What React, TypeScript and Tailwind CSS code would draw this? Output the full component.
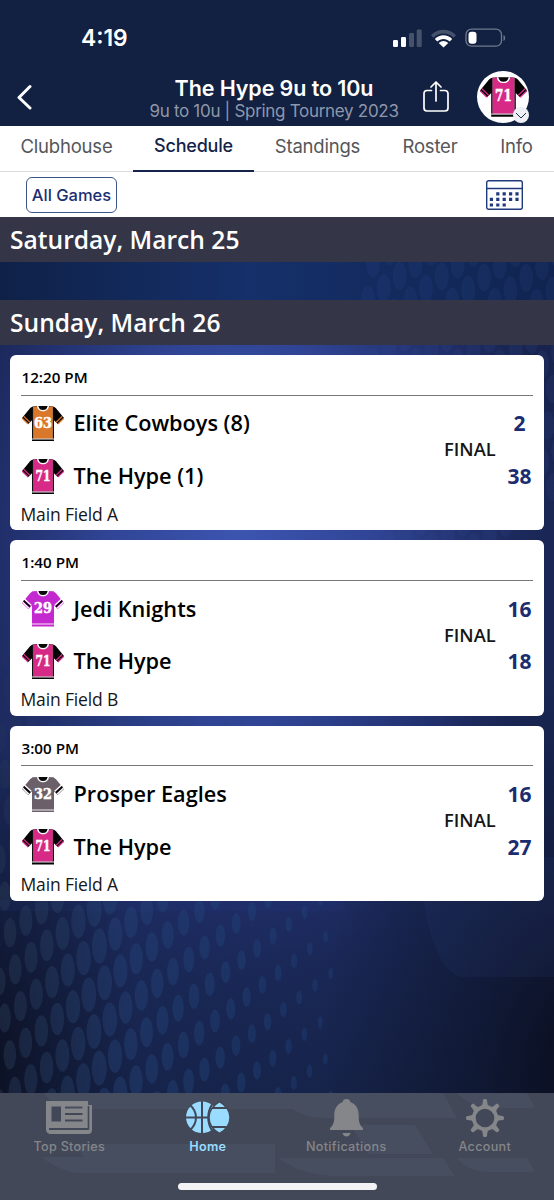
import { ReactNode } from "react";

interface Kit {
  number: string;
  color: string;
  sleeve: string;
  trim: string;
  dark?: boolean;
}

interface Team {
  name: string;
  score: number;
  kit: Kit;
}

interface Game {
  time: string;
  field: string;
  teams: Team[];
}

const hypeKit: Kit = { number: "71", color: "#d62a86", sleeve: "#050505", trim: "#d62a86", dark: true };
const cowboysKit: Kit = { number: "63", color: "#d9772b", sleeve: "#050505", trim: "#d9772b", dark: true };
const jediKit: Kit = { number: "29", color: "#c429cf", sleeve: "#c429cf", trim: "#050505" };
const eaglesKit: Kit = { number: "32", color: "#6b5f69", sleeve: "#6b5f69", trim: "#050505" };

const games: Game[] = [
  {
    time: "12:20 PM",
    field: "Main Field A",
    teams: [
      { name: "Elite Cowboys (8)", score: 2, kit: cowboysKit },
      { name: "The Hype (1)", score: 38, kit: hypeKit },
    ],
  },
  {
    time: "1:40 PM",
    field: "Main Field B",
    teams: [
      { name: "Jedi Knights", score: 16, kit: jediKit },
      { name: "The Hype", score: 18, kit: hypeKit },
    ],
  },
  {
    time: "3:00 PM",
    field: "Main Field A",
    teams: [
      { name: "Prosper Eagles", score: 16, kit: eaglesKit },
      { name: "The Hype", score: 27, kit: hypeKit },
    ],
  },
];

function Jersey({ kit, className }: { kit: Kit; className: string }) {
  const edge = kit.dark ? "#050505" : kit.color;
  return (
    <svg viewBox="0 0 42 35.5" className={className}>
      <path d="M11 .5 16 0h10l5 .5c2 .5 3 1.500 4 3L42 12l-6.300 6-4-4H10.300l-4 4L0 12l7-8.500c1-1.500 2-2.500 4-3Z" fill={kit.sleeve} />
      {kit.dark ? (
        <g stroke={kit.trim} strokeWidth="1.200">
          <path d="m1.700 10.300 6.200 6M40.300 10.300l-6.200 6M.2 12.300l6 5.700M41.800 12.300l-6 5.700" />
        </g>
      ) : (
        <>
          <path d="m2.600 8.200 6.600 6M39.400 8.200l-6.600 6M.7 11.100l6 5.900M41.300 11.100l-6 5.900" stroke="#fff" strokeWidth="1.300" />
          <path d="m1.600 9.700 6.400 6M40.400 9.700l-6.400 6" stroke={kit.trim} strokeWidth="1.600" />
        </>
      )}
      <path d="M10 1h22v34.500H10Z" fill={edge} />
      <path d={kit.dark ? "M11.200.5h19.600v32.300H11.200Z" : "M10 .5h22v32.500H10Z"} fill={kit.color} />
      {kit.dark && <path d="M11.200 1v31M30.800 1v31" stroke="#fff" strokeOpacity=".4" strokeWidth=".4" />}
      <path d="M10 33h22" stroke="#fff" strokeWidth=".9" />
      <path d="M15 0c.6 3.700 3 5.300 6 5.300S26.400 3.700 27 0Z" fill="#fff" />
      <path d="M16.400 0c.5 2.900 2.100 4.100 4.600 4.100S25.100 2.900 25.600 0Z" fill="#080808" />
      <text
        x="21"
        y="21.5"
        textAnchor="middle"
        fill="#fff"
        stroke="#fff"
        strokeWidth=".5"
        fontSize="14.5"
        fontWeight="700"
        className="font-['DejaVu_Serif',serif]"
        textLength={kit.number === "71" ? 15 : 18}
        lengthAdjust="spacingAndGlyphs"
      >
        {kit.number}
      </text>
    </svg>
  );
}

function Backdrop() {
  // halftone dots, shrinking towards the middle of the screen
  const left: ReactNode[] = [];
  for (let j = -9; j < 14; j++) {
    for (let i = -12; i < 30; i++) {
      const x = 10 + 15.8 * i + 5.2 * j;
      const y = 932.7 - 12 * i + 36.7 * j;
      if (x < -8 || x > 335 || y < 640 || y > 1120) continue;
      const size = x < 100 ? 0.82 + x / 550 : 1 - (x - 100) / 330;
      const fade = y < 900 ? Math.max(0.15, (y - 600) / 300) : 1;
      left.push(<ellipse key={`${i}.${j}`} cx={x} cy={y} rx={7.5 * size} ry={17.5 * size} opacity={fade} />);
    }
  }
  const right: ReactNode[] = [];
  for (let j = -1; j < 11; j++) {
    for (let i = 0; i < 32; i++) {
      const x = 368 + 15.8 * i - 5.2 * j;
      const y = 300 - 12 * i + 36.7 * j;
      if (y < 240 || y > 560 || x < 365 || x > 570) continue;
      right.push(<ellipse key={`${i}.${j}`} cx={x} cy={y} rx="7" ry="14" />);
    }
  }
  return (
    <svg viewBox="0 0 554 876" className="absolute inset-0 h-full w-full" preserveAspectRatio="none">
      <defs>
        <radialGradient id="glow" gradientUnits="userSpaceOnUse" cx="0" cy="0" r="1" gradientTransform="translate(240 310) scale(330 480)">
          <stop offset="0" stopColor="#3c55b0" />
          <stop offset=".4" stopColor="#304596" />
          <stop offset=".75" stopColor="#212f6c" stopOpacity=".8" />
          <stop offset="1" stopColor="#1b2858" stopOpacity="0" />
        </radialGradient>
        <linearGradient id="base" x1="0" y1="0" x2="0" y2="1">
          <stop offset="0" stopColor="#17224a" />
          <stop offset=".78" stopColor="#1b2a5c" />
          <stop offset="1" stopColor="#16234a" />
        </linearGradient>
        <linearGradient id="top" x1="0" y1="0" x2="1" y2="0">
          <stop offset="0" stopColor="#0f2148" />
          <stop offset=".45" stopColor="#15306a" />
          <stop offset="1" stopColor="#10244f" />
        </linearGradient>
        <radialGradient id="cornerLeft" gradientUnits="userSpaceOnUse" cx="0" cy="0" r="1" gradientTransform="translate(-20 850) scale(160 330)">
          <stop offset="0" stopColor="#0a0e1c" stopOpacity=".9" />
          <stop offset="1" stopColor="#0a0e1c" stopOpacity="0" />
        </radialGradient>
        <radialGradient id="cornerRight" gradientUnits="userSpaceOnUse" cx="0" cy="0" r="1" gradientTransform="translate(590 850) scale(270 420)">
          <stop offset="0" stopColor="#080b18" stopOpacity=".95" />
          <stop offset=".4" stopColor="#0b1022" stopOpacity=".6" />
          <stop offset="1" stopColor="#0b1022" stopOpacity="0" />
        </radialGradient>
        <linearGradient id="dots" gradientUnits="userSpaceOnUse" x1="0" y1="0" x2="330" y2="0">
          <stop offset="0" stopColor="#2a3b56" stopOpacity=".42" />
          <stop offset=".35" stopColor="#264478" stopOpacity=".42" />
          <stop offset=".7" stopColor="#20467c" stopOpacity=".38" />
          <stop offset="1" stopColor="#224a88" stopOpacity=".28" />
        </linearGradient>
      </defs>
      <rect width="554" height="876" fill="url(#base)" />
      <rect width="554" height="876" fill="url(#glow)" />
      <rect width="554" height="100" fill="url(#top)" />
      <rect width="554" height="876" fill="url(#cornerLeft)" />
      <rect width="554" height="876" fill="url(#cornerRight)" />
      <path d="M420 640c2 62 16 116 42 120h92V640Z" fill="#2a3f78" opacity=".16" />
      <path d="M0 683h344v11H0Z" fill="#2b3f8c" opacity=".12" />
      <g transform="translate(0 -217)">
        <g fill="url(#dots)">{left}</g>
        <g fill="#34529a" opacity=".14">{right}</g>
      </g>
    </svg>
  );
}

function StatusBar() {
  return (
    <div className="flex h-[72px] items-center justify-between pl-[81px] pr-[48px] pt-[3px]">
      <span className="pt-px text-[22.8px] font-semibold leading-none">4:19</span>
      <svg viewBox="0 0 113 20" className="h-5 w-[113px]">
        <g fill="#fff">
          <rect x="0" y="12" width="5" height="7" rx="1.200" />
          <rect x="8" y="9" width="5" height="10" rx="1.200" />
          <rect x="16" y="5" width="5" height="14" rx="1.200" opacity=".22" />
          <rect x="23.700" y="1.500" width="5" height="17.500" rx="1.200" opacity=".22" />
          <path d="M38 7.200c7-7.200 18-7.200 25 0l-2.500 2.600c-5.500-5.600-14.500-5.600-20 0Z" opacity=".22" />
          <path d="M41.800 10.900c5-5 12.400-5 17.400 0l-2.500 2.600c-3.600-3.500-8.800-3.500-12.400 0Z" />
          <path d="M45.700 14.900c3-2.700 6.600-2.700 9.600 0L50.500 19.500Z" />
          <rect x="75.500" y="3.800" width="8" height="12" rx="3" />
          <path d="M110.500 7c2.200.8 2.200 5.200 0 6Z" opacity=".4" />
        </g>
        <rect x="73" y="1.200" width="35.500" height="17" rx="5.500" fill="none" stroke="#fff" strokeOpacity=".4" strokeWidth="1.300" />
      </svg>
    </div>
  );
}

function Header() {
  return (
    <header className="h-[126px] bg-[#122041] text-white">
      <StatusBar />
      <div className="flex h-[50px] items-center pl-[17px] pr-[25px]">
        <svg viewBox="0 0 16 26" className="h-[26px] w-4" fill="none" stroke="#fff" strokeWidth="3" strokeLinecap="round" strokeLinejoin="round">
          <path d="M13 2.500 2 13.500l11 10.500" />
        </svg>
        <div className="ml-[103px] flex w-[276px] flex-col items-center whitespace-nowrap pt-[2px]">
          <h1 className="text-[21.5px] font-semibold leading-[25px] tracking-[-0.1px]">The Hype 9u to 10u</h1>
          <p className="text-[17px] leading-[20px] tracking-[-0.3px] text-[#8f97aa]">9u to 10u | Spring Tourney 2023</p>
        </div>
        <svg viewBox="0 0 26 32" className="ml-[11px] h-8 w-[26px]" fill="none" stroke="#fff" strokeWidth="1.700" strokeLinecap="round" strokeLinejoin="round">
          <path d="M8.500 9.500H4a3 3 0 0 0-3 3V27a3 3 0 0 0 3 3h18a3 3 0 0 0 3-3V12.500a3 3 0 0 0-3-3h-4.500M13 20V1.500M8 6l5-5 5 5" />
        </svg>
        <div className="relative ml-auto flex h-[52px] w-[52px] shrink-0 items-center justify-center rounded-full bg-white">
          <Jersey kit={hypeKit} className="h-[40px] w-[47px]" />
          <span className="absolute bottom-0 right-0 flex h-4 w-4 items-center justify-center rounded-full bg-[#eef0f6]">
            <svg viewBox="0 0 12 7" className="h-[7px] w-3" fill="none" stroke="#27304a">
              <path d="m1 1 5 5 5-5" />
            </svg>
          </span>
        </div>
      </div>
    </header>
  );
}

function Tabs() {
  return (
    <nav className="flex h-[46px] whitespace-nowrap border-b border-[#dcdcdc] bg-white text-[18.5px] leading-[40px] tracking-[-0.2px] text-[#55565a]">
      <span className="w-[133px] text-center">Clubhouse</span>
      <span className="h-[46px] w-[121px] border-b-2 border-[#14234a] text-center text-[18px] font-medium text-[#14234a]">Schedule</span>
      <span className="w-[127px] text-center">Standings</span>
      <span className="w-[98px] text-center">Roster</span>
      <span className="w-[75px] text-center">Info</span>
    </nav>
  );
}

function FilterBar() {
  return (
    <div className="flex h-[45px] items-center justify-between bg-white pl-[26px] pr-[31px]">
      <button className="h-[36px] w-[91px] whitespace-nowrap rounded-[6px] border-[1.5px] border-[#3c5488] pt-px text-[16.5px] font-medium leading-none text-[#1c2f72]">
        All Games
      </button>
      <svg viewBox="0 0 37 30" className="h-[30px] w-[37px]" fill="none" stroke="#203a7c" strokeWidth="1.400">
        <rect x=".7" y=".7" width="35.600" height="28.600" rx="2" />
        <path d="M1 8.500h35" />
        <path d="M10.200 13.800h23M3.800 19.300h30M3.800 25h17" strokeWidth="3.200" strokeDasharray="3.200 3.200" />
      </svg>
    </div>
  );
}

function DateHeading({ children }: { children: ReactNode }) {
  return (
    <h2 className="h-[45px] whitespace-nowrap bg-[#343546] pl-[10px] text-[24.6px] font-semibold leading-[46px] text-white">
      {children}
    </h2>
  );
}

function GameCard({ game }: { game: Game }) {
  return (
    <article className="flex h-[175.4px] flex-col rounded-[6px] bg-white px-[10.5px] text-black">
      <div className="h-[40.5px] border-b border-[#77777b] pl-px pt-px text-[15.2px] font-semibold leading-[42px]">{game.time}</div>
      <div className="flex h-[107px] items-center">
        <div className="flex-1 pt-px">
          {game.teams.map((team) => (
            <div key={team.name} className="flex h-[52.7px] items-center">
              <Jersey kit={team.kit} className="ml-px mt-px h-[35.5px] w-[42px]" />
              <span className="ml-[10px] whitespace-nowrap pt-px text-[21.7px] font-semibold">{team.name}</span>
            </div>
          ))}
        </div>
        <span className="w-[51px] whitespace-nowrap text-center text-[18.3px] font-semibold text-[#161616]">FINAL</span>
        <div className="ml-[11px] w-[27px] pt-[2px] text-center text-[21px] font-bold text-[#1b2c6f]">
          {game.teams.map((team) => (
            <div key={team.name} className="h-[52.7px] leading-[52px]">{team.score}</div>
          ))}
        </div>
      </div>
      <div className="whitespace-nowrap text-[17.5px] leading-[23px] tracking-[-0.15px] text-[#161616]">{game.field}</div>
    </article>
  );
}

function TabItem({ label, active, children }: { label: string; active?: boolean; children: ReactNode }) {
  return (
    <div className={`flex flex-col items-center ${active ? "font-semibold text-[#99dcff]" : "font-medium text-[#858689]"}`}>
      <div className="flex h-[44px] items-center pt-[5px]">{children}</div>
      <span className="text-[12.6px] leading-[20px] tracking-[0.3px]">{label}</span>
    </div>
  );
}

function TabBar() {
  const teeth = [0, 45, 90, 135, 180, 225, 270, 315];
  return (
    <footer className="relative mt-auto h-[107px] bg-[#424858]">
      <svg viewBox="0 0 554 107" className="absolute inset-0 h-[107px] w-full" fill="#7780a0" fillOpacity=".11">
        <path d="M43 0h235c5 9 14 14 25 16H78C62 16 50 9 43 0ZM278 0h165l14 25H325c-22 0-36-8-47-25ZM457 0h70l8 15h-34c-22 0-34-4-44-15ZM75 51h200v29H75c-15-4-26-9-33-16h42ZM278 65h165l12 18H340c-29 0-44-6-62-18ZM350 32h65l18 29h-64ZM457 65h70l8 14h-45c-16 0-26-5-33-14Z" />
      </svg>
      <div className="relative grid grid-cols-4">
        <TabItem label="Top Stories">
          <svg viewBox="0 0 46 33" className="h-[33px] w-[46px]" fill="currentColor">
            <path fillRule="evenodd" d="M0 0h42v27H3v2h39V4h4v25c0 2.500-1.500 4-4 4H5c-3 0-5-2-5-5Zm5.500 5.500v15H15v-15Zm13.500 0v2h17.500v-2ZM19 12v2h17.500v-2Zm0 6.500v2h17.500v-2Z" />
            <path d="M3 28h39.500V5" fill="none" stroke="#424858" strokeWidth="1.600" />
          </svg>
        </TabItem>
        <TabItem label="Home" active>
          <svg viewBox="0 0 44 33" className="h-[33px] w-[44px]">
            <ellipse cx="16" cy="16.300" rx="16" ry="15.700" fill="currentColor" />
            <path d="M16 0v33M0 16.500h32M4 4c8 7 8 18 0 25M26 3.500c-5 8-5 18 0 26" stroke="#424858" strokeWidth="2" fill="none" />
            <path d="M33.500.5C25 5.500 23 11 23 16.500S25 27.500 33.500 32.500C42 27.500 44 22 44 16.500S42 5.500 33.500.5Z" fill="currentColor" stroke="#424858" strokeWidth="1.500" />
            <path d="M26 7h16M26 26h16" stroke="#424858" strokeWidth="1.800" />
          </svg>
        </TabItem>
        <TabItem label="Notifications">
          <svg viewBox="0 0 33 38" className="h-[38px] w-[33px]" fill="currentColor">
            <path d="M16.500 0c2.500 0 3.500 1.300 3.800 3C26 5 28.700 10 28.700 16c0 6 .6 8.500 2.300 11 .8 1 2 1.500 2 3v1H0v-1c0-1.500 1.200-2 2-3 1.700-2.500 2.300-5 2.300-11C4.300 10 7 5 12.700 3c.3-1.700 1.300-3 3.800-3ZM12.500 34h8c-.5 2.300-2 3.500-4 3.500s-3.500-1.200-4-3.500Z" />
          </svg>
        </TabItem>
        <TabItem label="Account">
          <svg viewBox="-19 -19 38 38" className="h-[38px] w-[38px]" fill="currentColor">
            <path fillRule="evenodd" d="M-13 0a13 13 0 1 1 26 0 13 13 0 1 1-26 0Zm3.700 0a9.300 9.300 0 1 0 18.600 0A9.300 9.300 0 1 0-9.300 0Z" />
            {teeth.map((angle) => (
              <path key={angle} d="M-4.500-11.500c2-1 2.200-3 2.400-6 0-2 4.200-2 4.200 0 .2 3 .4 5 2.400 6Z" transform={`rotate(${angle})`} />
            ))}
          </svg>
        </TabItem>
      </div>
      <div className="relative mx-auto mt-[26px] h-[7px] w-[199px] rounded-full bg-[#f3f3f5]" />
    </footer>
  );
}

export default function App() {
  return (
    <div className="flex h-[1200px] w-[554px] flex-col overflow-hidden bg-[#122041] font-['Inter',sans-serif]">
      <Header />
      <Tabs />
      <FilterBar />
      <main className="relative h-[876px] font-['Open_Sans',sans-serif]">
        <Backdrop />
        <div className="relative">
          <DateHeading>Saturday, March 25</DateHeading>
          <div className="h-[38px]" />
          <DateHeading>Sunday, March 26</DateHeading>
          <div className="flex flex-col gap-[10px] pl-[10px] pr-[10.5px] pt-[10px]">
            {games.map((game) => (
              <GameCard key={game.time} game={game} />
            ))}
          </div>
        </div>
      </main>
      <TabBar />
    </div>
  );
}
